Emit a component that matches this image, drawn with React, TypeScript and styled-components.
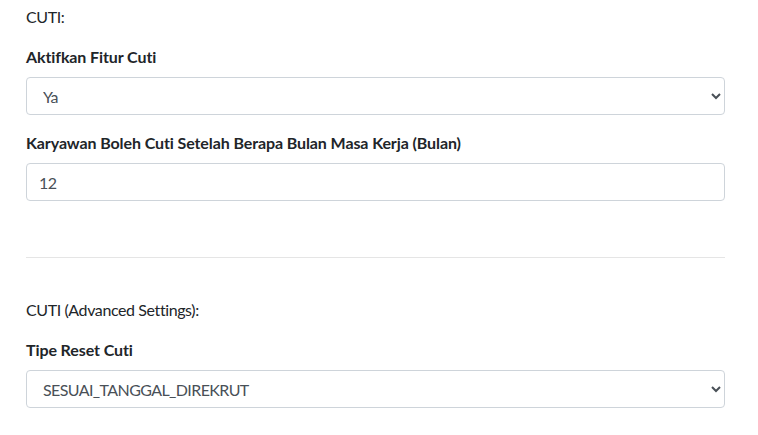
import styled, { createGlobalStyle } from "styled-components";

const GlobalStyle = createGlobalStyle`
  body {
    margin: 0;
    background: #ffffff;
    font-family: "Lato", "Open Sans", sans-serif;
    font-size: 16px;
    line-height: 1.5;
    color: #212529;
  }
  * {
    box-sizing: border-box;
  }
`;

const Page = styled.div`
  padding: 5px 33px 0 26px;
`;

const SectionTitle = styled.p`
  margin: 0 0 16px;
  font-weight: 400;
  letter-spacing: -0.4px;
`;

const FormGroup = styled.div`
  margin-bottom: 16px;
`;

const Label = styled.label`
  display: inline-block;
  margin-bottom: 8px;
  font-weight: 700;
  letter-spacing: -0.1px;
`;

const fieldBase = `
  display: block;
  width: 100%;
  height: 38px;
  padding: 6px 12px;
  font-family: inherit;
  font-size: 16px;
  line-height: 1.5;
  letter-spacing: -0.6px;
  color: #495057;
  background: #ffffff;
  border: 1px solid #ced4da;
  border-radius: 4px;
  outline: none;
`;

const Select = styled.select`
  ${fieldBase}
`;

const Input = styled.input`
  ${fieldBase}
`;

const Spacer = styled.div<{ $h: number }>`
  height: ${(p) => p.$h}px;
`;

const Divider = styled.hr`
  margin: 16px 0;
  border: 0;
  border-top: 1px solid rgba(0, 0, 0, 0.1);
`;

export default function App() {
  return (
    <>
      <GlobalStyle />
      <Page>
        <SectionTitle>CUTI:</SectionTitle>

        <FormGroup>
          <Label>Aktifkan Fitur Cuti</Label>
          <Select defaultValue="Ya">
            <option value="Ya">Ya</option>
            <option value="Tidak">Tidak</option>
          </Select>
        </FormGroup>

        <FormGroup>
          <Label>Karyawan Boleh Cuti Setelah Berapa Bulan Masa Kerja (Bulan)</Label>
          <Input type="text" defaultValue="12" />
        </FormGroup>

        <Spacer $h={24} />
        <Divider />
        <Spacer $h={24} />

        <SectionTitle>CUTI (Advanced Settings):</SectionTitle>

        <FormGroup>
          <Label>Tipe Reset Cuti</Label>
          <Select defaultValue="SESUAI_TANGGAL_DIREKRUT">
            <option value="SESUAI_TANGGAL_DIREKRUT">SESUAI_TANGGAL_DIREKRUT</option>
            <option value="AWAL_TAHUN">AWAL_TAHUN</option>
          </Select>
        </FormGroup>
      </Page>
    </>
  );
}
